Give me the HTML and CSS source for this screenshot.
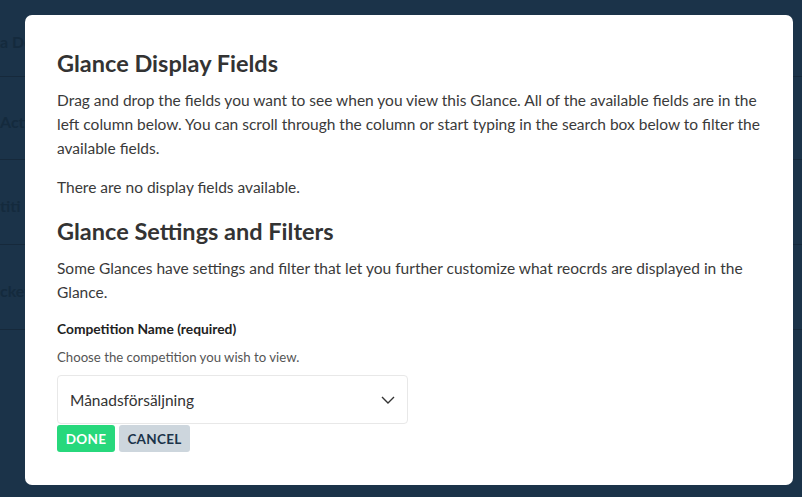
FILE: index.html
```html
<!DOCTYPE html>
<html>
<head>
<meta charset="utf-8">
<link rel="stylesheet" href="styles.css">
</head>
<body>
<div class="page">
  <div class="side-row r1"><span class="side-text">a De</span></div>
  <div class="side-row r2"><span class="side-text">Acti</span></div>
  <div class="side-row r3"><span class="side-text">titi</span></div>
  <div class="side-row r3"><span class="side-text">cket</span></div>
</div>
<div class="modal">
  <h2 class="title">Glance Display Fields</h2>
  <p class="text first">Drag and drop the fields you want to see when you view this Glance. All of the available fields are in the left column below. You can scroll through the column or start typing in the search box below to filter the available fields.</p>
  <p class="text empty">There are no display fields available.</p>
  <h2 class="title second">Glance Settings and Filters</h2>
  <p class="text first">Some Glances have settings and filter that let you further customize what reocrds are displayed in the Glance.</p>
  <div class="label">Competition Name (required)</div>
  <div class="help">Choose the competition you wish to view.</div>
  <div class="select">
    <span class="select-value">Månadsförsäljning</span>
    <svg class="chev" width="14" height="8" viewBox="0 0 14 8"><path d="M1 1 L7 7 L13 1" fill="none" stroke="#333" stroke-width="1.4"/></svg>
  </div>
  <div class="actions">
    <button class="btn done">DONE</button>
    <button class="btn cancel">CANCEL</button>
  </div>
</div>
</body>
</html>
```
FILE: styles.css
```css
html, body {
  margin: 0;
  padding: 0;
  width: 802px;
  height: 497px;
  overflow: hidden;
  background: #1b3349;
  font-family: Lato, "Liberation Sans", sans-serif;
}
.page {
  display: flex;
  flex-direction: column;
  width: 100%;
}
.side-row {
  box-sizing: border-box;
  border-bottom: 1px solid #16293b;
  display: flex;
  align-items: center;
  padding-top: 6px;
}
.side-row.r1 { height: 77px; }
.side-row.r2 { height: 83px; }
.side-row.r3 { height: 85px; }
.side-text {
  margin-left: 0;
  font-size: 16px;
  font-weight: 700;
  color: #142a3d;
  white-space: nowrap;
}
.modal {
  position: absolute;
  left: 25px;
  top: 15px;
  width: 768px;
  height: 470px;
  box-sizing: border-box;
  background: #fff;
  border-radius: 7px;
  padding: 33px 32px;
  color: #3a3a3a;
}
.title {
  margin: 0;
  font-size: 23.5px;
  line-height: 30px;
  font-weight: 700;
  color: #333;
}
.title.second {
  margin-top: 17px;
}
.text {
  margin: 0;
  font-size: 15.5px;
  line-height: 24px;
}
.text.first {
  margin-top: 10px;
}
.text.empty {
  margin-top: 15px;
}
.label {
  margin-top: 15px;
  font-size: 13.8px;
  line-height: 20px;
  font-weight: 700;
  color: #222;
}
.help {
  margin-top: 8px;
  font-size: 13.2px;
  line-height: 20px;
  color: #555;
}
.select {
  margin-top: 8px;
  width: 351px;
  height: 49px;
  box-sizing: border-box;
  border: 1px solid #e8e8e8;
  border-radius: 4px;
  display: flex;
  align-items: center;
  justify-content: space-between;
  padding: 0 12px 0 12px;
}
.select-value {
  font-size: 15.5px;
  color: #333;
}
.chev {
  display: block;
}
.actions {
  margin-top: 1px;
  display: flex;
  gap: 4px;
}
.btn {
  border: none;
  border-radius: 3px;
  height: 27px;
  padding: 0;
  font-family: Lato, "Liberation Sans", sans-serif;
  font-weight: 700;
  font-size: 13.5px;
  letter-spacing: 0.3px;
}
.done {
  background: #27d87c;
  color: #fff;
  width: 58px;
}
.cancel {
  background: #cdd6dd;
  color: #1b3349;
  width: 71px;
}
```
